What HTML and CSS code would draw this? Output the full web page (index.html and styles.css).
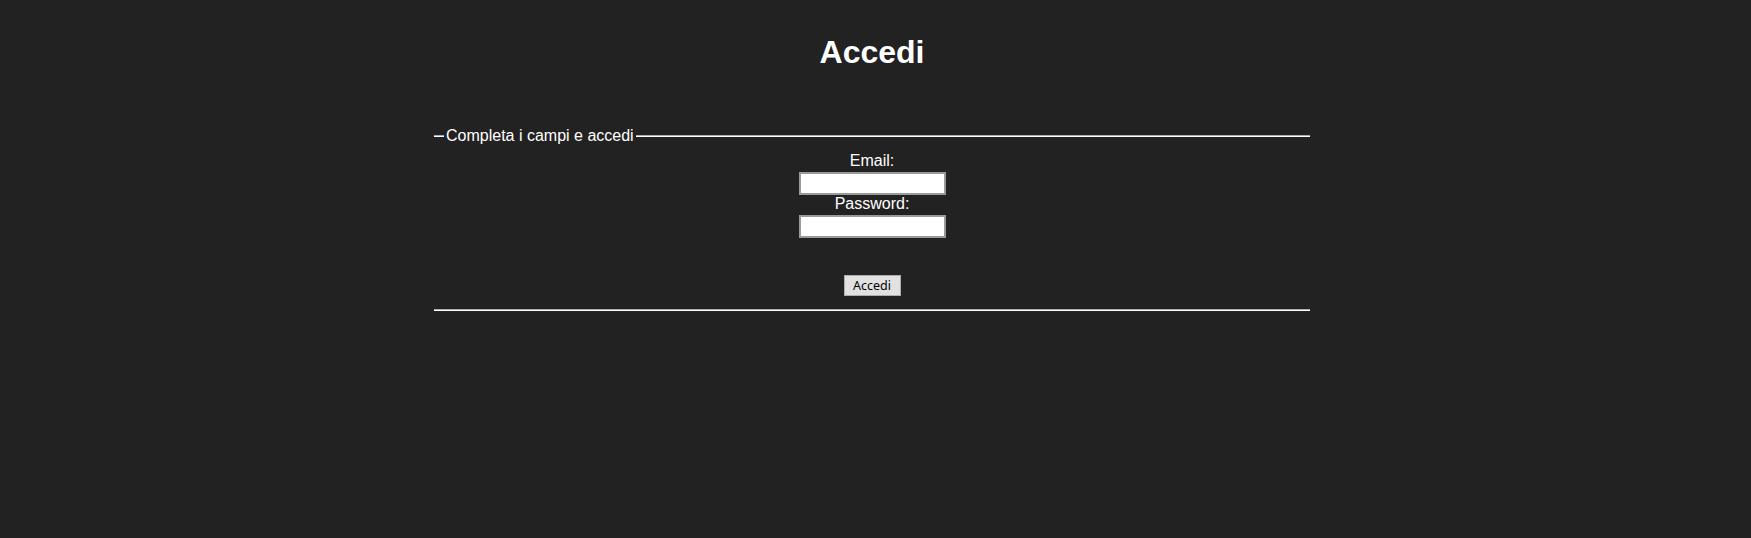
FILE: index.html
```html
<!DOCTYPE html>
<html lang="it">
<head>
<meta charset="utf-8">
<title>Accedi</title>
<link rel="stylesheet" href="styles.css">
</head>
<body>
  <h1 class="title">Accedi</h1>
  <form class="login-form">
    <fieldset class="login-fieldset">
      <legend class="login-legend">Completa i campi e accedi</legend>
      <div class="fields">
        <label class="field-label" for="email">Email:</label>
        <input class="field-input" type="email" id="email" name="email">
        <label class="field-label" for="password">Password:</label>
        <input class="field-input" type="password" id="password" name="password">
        <button class="submit-btn" type="submit">Accedi</button>
      </div>
    </fieldset>
  </form>
</body>
</html>
```

FILE: styles.css
```css
html, body {
  background: #222222;
}

body {
  margin: 0;
  padding: 34px 7px 0 0;
  color: #ffffff;
  font-family: "Liberation Sans", Arial, sans-serif;
  font-size: 16px;
}

.title {
  margin: 0;
  font-size: 32px;
  line-height: 37px;
  font-weight: bold;
  text-align: center;
}

.login-form {
  margin: 56px 0 0;
}

.login-fieldset {
  box-sizing: border-box;
  width: 876px;
  margin: 0 auto;
  padding: 7px 10px 13px;
  border: 2px groove #ffffff;
  border-left: none;
  border-right: none;
  min-inline-size: 0;
}

.login-legend {
  padding: 0 2px;
  font-size: 16px;
  line-height: 18px;
  color: #ffffff;
}

.fields {
  display: flex;
  flex-direction: column;
  align-items: center;
}

.field-label {
  display: block;
  line-height: 18px;
  margin-bottom: 2px;
  text-align: center;
}

.field-input {
  box-sizing: border-box;
  width: 147px;
  height: 23px;
  margin: 0;
  padding: 1px 2px;
  border: 2px solid #9a9a9a;
  background: #ffffff;
  font-family: "Liberation Sans", Arial, sans-serif;
  font-size: 13px;
}

.submit-btn {
  box-sizing: border-box;
  width: 57px;
  height: 21px;
  margin-top: 37px;
  padding: 0;
  border: 1px solid #adadad;
  background: #e1e1e1;
  color: #000000;
  font-family: "Noto Sans", "Open Sans", sans-serif;
  font-size: 12.5px;
  line-height: 19px;
}
```
